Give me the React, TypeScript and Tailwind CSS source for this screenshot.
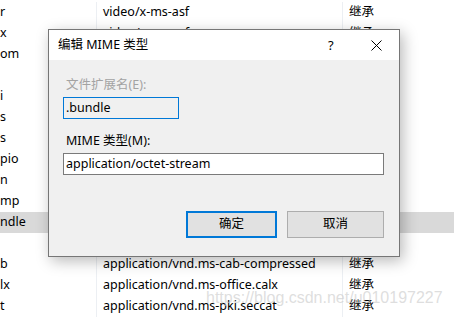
import React from "react";

// rows 2-11 sit behind the dialog, so only the first column shows there
const rows: [string, string, string][] = [
  ["r", "video/x-ms-asf", "继承"],
  ["x", "video/x-ms-asf", "继承"],
  ["om", "", ""],
  ["", "", ""],
  ["i", "", ""],
  ["s", "", ""],
  ["s", "", ""],
  ["pio", "", ""],
  ["n", "", ""],
  ["mp", "", ""],
  ["ndle", "", ""],
  ["", "", ""],
  ["b", "application/vnd.ms-cab-compressed", "继承"],
  ["lx", "application/vnd.ms-office.calx", "继承"],
  ["t", "application/vnd.ms-pki.seccat", "继承"],
];

const font = { fontFamily: '"Noto Sans", "Noto Sans CJK SC", sans-serif' };

const App = () => {
  return (
    <div className="relative w-[454px] h-[318px] overflow-hidden bg-white text-[12.5px] text-black" style={font}>
      {/* list behind the dialog */}
      <div className="pt-[2px]">
        {rows.map((r, i) => (
          <div key={i} className={`flex h-[21px] items-center ${i === 10 ? "bg-[#d9d9d9]" : ""}`}>
            <div className="w-[96px] h-full flex items-center whitespace-nowrap">{r[0]}</div>
            <div className="w-px h-full bg-[#eceff3]" />
            <div className="w-[245px] h-full flex items-center pl-[6px] whitespace-nowrap">{r[1]}</div>
            <div className="w-px h-full bg-[#eceff3]" />
            <div className="h-full flex items-center pl-[6px]">{r[2]}</div>
          </div>
        ))}
      </div>

      {/* watermark */}
      <div
        className="absolute left-[206px] top-[288px] text-[16px] leading-[20px] text-[rgba(200,200,200,0.6)] whitespace-nowrap"
        style={{ fontFamily: '"Liberation Sans", Arial, sans-serif' }}
      >
        https://blog.csdn.net/u010197227
      </div>

      {/* dialog */}
      <div className="absolute left-[48px] top-[29px] w-[352px] h-[228px] border border-[#767676] bg-[#f0f0f0] shadow-[3px_4px_14px_rgba(0,0,0,0.28)] flex flex-col">
        <div className="h-[30px] bg-white flex items-center pl-[9px] relative">
          <span>编辑 MIME 类型</span>
          <span className="absolute left-[279px] top-[6px] text-[13px]">?</span>
          <svg className="absolute left-[322px] top-[10px]" width="11" height="11" viewBox="0 0 11 11">
            <path d="M0.5 0.5 L10.5 10.5 M10.5 0.5 L0.5 10.5" stroke="#000" strokeWidth="1" fill="none" />
          </svg>
        </div>
        <div className="flex flex-col px-[14px] pt-[17px]">
          <div className="pl-[3px] h-[16px] leading-[16px] text-[#a3a3a3]">文件扩展名(E):</div>
          <div className="mt-[4px] w-[116px] h-[22px] border border-[#0078d7] flex items-center pl-[2px]">.bundle</div>
          <div className="mt-[14px] pl-[3px] h-[16px] leading-[16px]">MIME 类型(M):</div>
          <div className="mt-[4px] w-[321px] h-[22px] border border-[#7a7a7a] bg-white flex items-center pl-[2px]">
            application/octet-stream
          </div>
          <div className="mt-[36px] flex justify-end gap-[10px] pr-[1px]">
            <button className="w-[91px] h-[27px] border-2 border-[#0078d7] bg-[#e1e1e1] flex items-center justify-center">
              确定
            </button>
            <button className="w-[97px] h-[27px] border border-[#adadad] bg-[#e1e1e1] flex items-center justify-center">
              取消
            </button>
          </div>
        </div>
      </div>
    </div>
  );
};

export default App;
